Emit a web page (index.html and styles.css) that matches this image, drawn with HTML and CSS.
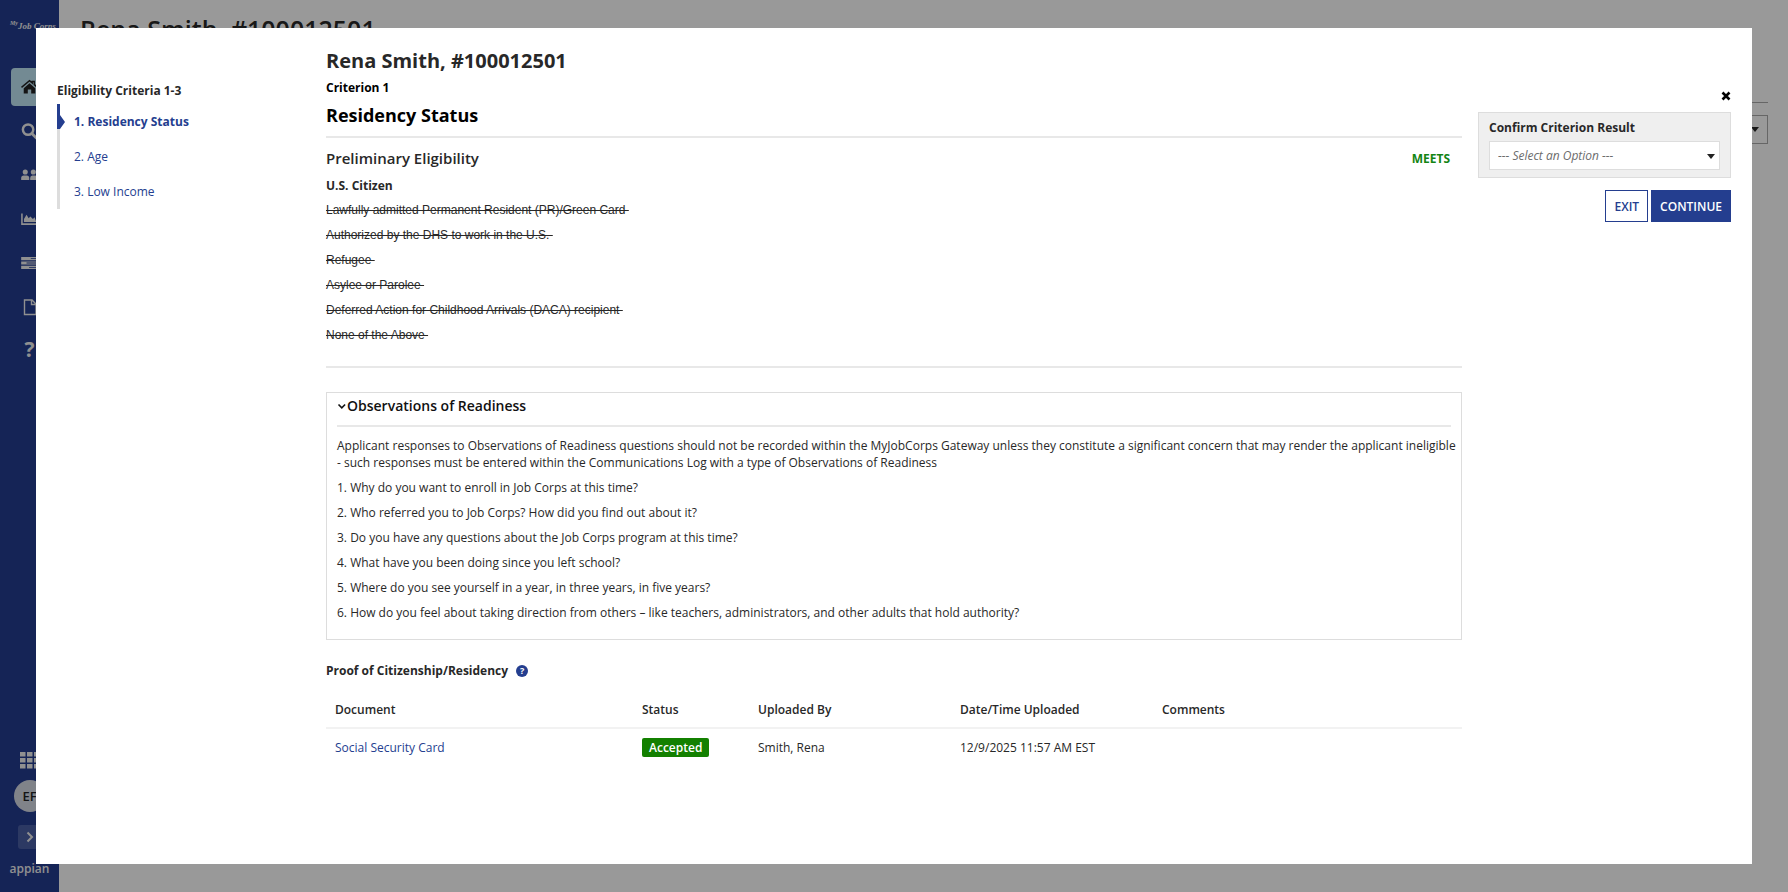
FILE: index.html
```html
<!DOCTYPE html>
<html lang="en">
<head>
<meta charset="utf-8">
<title>Eligibility Criteria - Residency Status</title>
<link rel="stylesheet" href="styles.css">
</head>
<body>
<div class="app" aria-hidden="true">
  <nav class="sidebar">
    <div class="brand"><span class="brand-my">My</span><span>Job Corps</span></div>
    <ul class="rail">
      <li><a class="rail-link active" href="#"><svg width="17" height="16" viewBox="0 0 20 18"><path d="M10 4.6 3.2 10.4V16.500h4.800v-4.500h4v4.500h4.800v-6.100z"/><path d="M.6 9.400 10 1.600l3.200 2.600V2.600h2.400v3.600l3.800 3.200" fill="none" stroke="currentColor" stroke-width="1.700"/></svg></a></li>
      <li><a class="rail-link" href="#"><svg width="17" height="17" viewBox="0 0 18 18"><circle cx="7.500" cy="7" r="5.500" fill="none" stroke="currentColor" stroke-width="2.600"/><path d="m11.500 11 4.500 4.500" stroke="currentColor" stroke-width="3" stroke-linecap="round"/></svg></a></li>
      <li><a class="rail-link" href="#"><svg width="17" height="14" viewBox="0 0 20 16"><circle cx="5" cy="4.500" r="3"/><circle cx="14.500" cy="4.500" r="3"/><path d="M.2 14v-2.500q0-3 3-3h3.500q3 0 3 3V14zM10.800 14v-2.500q0-3 2.500-3h3q3.500 0 3.500 3V14z"/></svg></a></li>
      <li><a class="rail-link" href="#"><svg width="17" height="14" viewBox="0 0 20 16"><path d="M.2 1.500H2v11.500h18V15H.2z"/><path d="M3.500 11.500V8l3-5 2.500 4 2-2 3 3 2-2 2 5.500z"/></svg></a></li>
      <li><a class="rail-link" href="#"><svg width="17" height="14" viewBox="0 0 20 16"><path fill-rule="evenodd" d="M.2 1H20v3.800H.2zM11.500 2.400v1h7v-1zM.2 6.100H20v3.800H.2zm6.300 1.400v1h12v-1zM.2 11.200H20V15H.2zm9.300 1.400v1h9v-1z"/></svg></a></li>
      <li><a class="rail-link" href="#"><svg width="14" height="17" viewBox="0 0 14 17"><path d="M1.500 1h7.500l4 4v10.500h-11.500zM8.500 1v4.500H13" fill="none" stroke="currentColor" stroke-width="1.400"/></svg></a></li>
      <li><a class="rail-link help-link" href="#">?</a></li>
    </ul>
    <div class="rail-foot">
      <svg class="grid-icon" width="20" height="18" viewBox="0 0 20 18"><path d="M0 1h5.500v4.500H0zM7 1h5.500v4.500H7zM14 1h5.500v4.500H14zM0 7h5.500v4.500H0zM7 7h5.500v4.500H7zM14 7h5.500v4.500H14zM0 13h5.500v4.500H0zM7 13h5.500v4.500H7zM14 13h5.500v4.500H14z"/></svg>
      <span class="avatar">EF</span>
      <button class="expand" type="button" aria-label="Expand"><svg width="8" height="12" viewBox="0 0 8 12"><path d="m1.500 1.500 4.500 4.500-4.500 4.500" fill="none" stroke="currentColor" stroke-width="2"/></svg></button>
      <span class="appian">appian</span>
    </div>
  </nav>
  <div class="page">
    <h1 class="page-title">Rena Smith, #100012501</h1>
    <hr class="page-rule">
    <div class="page-filter"><svg width="8" height="5" viewBox="0 0 8 5"><path d="M0 0h8L4 5z"/></svg></div>
  </div>
</div>

<div class="backdrop">
  <div class="modal" role="dialog" aria-labelledby="dialog-title">
    <aside class="steps">
      <h2 class="steps-title">Eligibility Criteria 1-3</h2>
      <ol class="step-list">
        <li class="step current"><a href="#">1. Residency Status</a></li>
        <li class="step"><a href="#">2. Age</a></li>
        <li class="step"><a href="#">3. Low Income</a></li>
      </ol>
    </aside>

    <main class="content">
      <h1 class="title" id="dialog-title">Rena Smith, #100012501</h1>
      <p class="criterion">Criterion 1</p>
      <h2 class="subtitle">Residency Status</h2>
      <section class="prelim">
        <div class="prelim-head"><h3 class="heading">Preliminary Eligibility</h3><strong class="meets">MEETS</strong></div>
        <p class="chosen">U.S. Citizen</p>
        <ul class="rejected">
          <li><s>Lawfully admitted Permanent Resident (PR)/Green Card&nbsp;</s></li>
          <li><s>Authorized by the DHS to work in the U.S.&nbsp;</s></li>
          <li><s>Refugee&nbsp;</s></li>
          <li><s>Asylee or Parolee&nbsp;</s></li>
          <li><s>Deferred Action for Childhood Arrivals (DACA) recipient&nbsp;</s></li>
          <li><s>None of the Above&nbsp;</s></li>
        </ul>
      </section>

      <section class="box">
        <h3 class="box-head"><button class="toggle" type="button" aria-expanded="true"><svg width="10" height="8" viewBox="0 0 10 8"><path d="m1.500 2.500 3.300 3.300L8.100 2.500" fill="none" stroke="currentColor" stroke-width="1.600"/></svg>Observations of Readiness</button></h3>
        <div class="box-body">
          <p>Applicant responses to Observations of Readiness questions should not be recorded within the MyJobCorps Gateway unless they constitute a significant concern that may render the applicant ineligible - such responses must be entered within the Communications Log with a type of Observations of Readiness</p>
          <p>1. Why do you want to enroll in Job Corps at this time?</p>
          <p>2. Who referred you to Job Corps? How did you find out about it?</p>
          <p>3. Do you have any questions about the Job Corps program at this time?</p>
          <p>4. What have you been doing since you left school?</p>
          <p>5. Where do you see yourself in a year, in three years, in five years?</p>
          <p>6. How do you feel about taking direction from others – like teachers, administrators, and other adults that hold authority?</p>
        </div>
      </section>

      <section class="proof">
        <h3 class="proof-title"><span id="proof-title">Proof of Citizenship/Residency</span><button class="hint" type="button" aria-label="Help">?</button></h3>
        <table class="docs" aria-labelledby="proof-title">
          <colgroup><col class="c-doc"><col class="c-status"><col class="c-by"><col class="c-date"><col></colgroup>
          <thead><tr><th scope="col">Document</th><th scope="col">Status</th><th scope="col">Uploaded By</th><th scope="col">Date/Time Uploaded</th><th scope="col">Comments</th></tr></thead>
          <tbody><tr><td><a href="#">Social Security Card</a></td><td><span class="tag">Accepted</span></td><td>Smith, Rena</td><td>12/9/2025 11:57 AM EST</td><td></td></tr></tbody>
        </table>
      </section>
    </main>

    <aside class="actions">
      <button class="close" type="button" aria-label="Close"><svg width="10" height="10" viewBox="0 0 10 10"><path d="m1.500 1.500 7 7m0-7-7 7" stroke="currentColor" stroke-width="2.600"/></svg></button>
      <div class="confirm">
        <label for="result">Confirm Criterion Result</label>
        <div class="select-wrap">
          <select id="result"><option>--- Select an Option ---</option><option>Meets</option><option>Does Not Meet</option></select>
          <svg class="caret" width="8" height="5" viewBox="0 0 8 5"><path d="M0 0h8L4 5z"/></svg>
        </div>
      </div>
      <div class="buttons"><button class="btn" type="button">EXIT</button><button class="btn primary" type="button">CONTINUE</button></div>
    </aside>
  </div>
</div>
</body>
</html>
```
FILE: styles.css
```css
:root {
  --blue: #243e8f;
  --text: #282828;
  --rule: #e8e8e8;
}

* { box-sizing: border-box; }

body {
  margin: 0;
  overflow: hidden;
  font: 12px/17px "Open Sans", sans-serif;
  color: var(--text);
}

h1, h2, h3, p, ul, ol { margin: 0; padding: 0; }
ul, ol { list-style: none; }
a { color: var(--blue); text-decoration: none; }
button, select { font: inherit; color: inherit; }
svg { display: block; fill: currentColor; }

/* Application behind the dialog */
.app { display: flex; height: 100vh; }

.sidebar {
  display: flex;
  flex-direction: column;
  width: 59px;
  flex: none;
  background: #243c90;
  color: #f0f0f0;
}

.brand {
  display: flex;
  height: 68px;
  padding: 16px 0 0 10px;
  font: italic bold 9px/20px "Liberation Serif", serif;
  white-space: nowrap;
}
.brand-my { font-size: 6px; line-height: 14px; }

.rail { display: flex; flex-direction: column; gap: 6px; }
.rail-link {
  display: flex;
  align-items: center;
  justify-content: center;
  height: 38px;
  margin: 0 11px;
  border-radius: 4px;
  color: #f0f0f0;
}
.rail-link.active { background: #c0e6f5; color: #222; }
.help-link { font-size: 21px; font-weight: 700; line-height: 34px; align-items: flex-start; }

.rail-foot {
  display: flex;
  flex-direction: column;
  align-items: center;
  margin-top: auto;
}
.avatar {
  width: 32px;
  margin: 11px 0 13px;
  border-radius: 50%;
  background: #d5dae5;
  color: #222;
  font-size: 13px;
  font-weight: 600;
  line-height: 32px;
  text-align: center;
}
.expand {
  display: flex;
  align-items: center;
  justify-content: center;
  width: 24px;
  height: 24px;
  padding: 0;
  border: 0;
  border-radius: 3px;
  background: #4a5fa6;
  color: #f0f0f0;
}
.appian { margin: 8px 0 11px; font-weight: 600; line-height: 24px; }

.page { flex: 1; padding: 12px 20px 0 21px; }
.page-title { font-size: 25px; font-weight: 600; line-height: 34px; }
.page-rule { margin: 56px 0 12px; border: 0; border-top: 1px solid #aaa; }
.page-filter {
  display: flex;
  align-items: center;
  justify-content: flex-end;
  width: 200px;
  height: 29px;
  margin-left: auto;
  padding-right: 8px;
  border: 1px solid #aaa;
}

/* Dialog */
.backdrop {
  position: fixed;
  inset: 0;
  display: flex;
  padding: 28px 36px;
  background: rgba(0, 0, 0, .4);
}
.modal {
  display: grid;
  grid-template-columns: 253px minmax(0, 1fr) 253px;
  column-gap: 16px;
  width: 100%;
  padding: 16px 21px;
  background: #fff;
}

.steps { padding-top: 38px; }
.steps-title { font-size: 12px; font-weight: 700; line-height: 18px; }
.step-list { margin-top: 4px; }
.step {
  position: relative;
  height: 35px;
  padding-left: 14px;
  border-left: 3px solid #ddd;
  line-height: 35px;
}
.step.current { font-weight: 700; }
.step.current::before {
  content: "";
  position: absolute;
  top: 0;
  left: -3px;
  width: 8px;
  height: 26px;
  background: var(--blue);
  clip-path: polygon(0 0, 3px 0, 3px 11px, 8px 18px, 3px 25px, 0 25px);
}

.title { font-size: 20px; font-weight: 700; line-height: 34px; }
.criterion { color: #000; font-weight: 700; line-height: 19px; }
.subtitle {
  padding: 4px 0 7px;
  border-bottom: 2px solid var(--rule);
  color: #000;
  font-size: 18px;
  font-weight: 700;
  line-height: 28px;
}

.prelim { padding: 8px 0 18px; border-bottom: 2px solid var(--rule); }
.prelim-head {
  display: flex;
  align-items: center;
  justify-content: space-between;
  padding-right: 12px;
}
.heading { font-size: 15px; font-weight: 600; line-height: 24px; }
.meets { color: #138413; font-weight: 700; }
.chosen { margin-top: 7px; font-weight: 700; line-height: 17px; }
.rejected { margin-top: 4px; font: 12px/25px "Liberation Sans", Arial, sans-serif; }

.box {
  margin-top: 24px;
  padding: 1px 10px 18px;
  border: 1px solid #ddd;
}
.box-head { padding-bottom: 7px; margin-bottom: 10px; border-bottom: 2px solid var(--rule); }
.box-body { margin-right: -8px; }
.box-body p + p { margin-top: 8px; }
.toggle {
  display: flex;
  align-items: center;
  padding: 0;
  border: 0;
  background: none;
  color: #111;
  font-size: 14px;
  font-weight: 600;
  line-height: 24px;
}

.proof { margin-top: 19px; }
.proof-title {
  display: flex;
  align-items: center;
  gap: 8px;
  font-size: 12px;
  font-weight: 700;
  line-height: 24px;
}
.hint {
  width: 12px;
  height: 12px;
  padding: 0;
  border: 0;
  border-radius: 50%;
  background: var(--blue);
  color: #fff;
  font-size: 9px;
  font-weight: 700;
  line-height: 12px;
}
.docs { width: 100%; margin-top: 8px; border-collapse: collapse; table-layout: fixed; text-align: left; }
.c-doc { width: 307px; }
.c-status { width: 116px; }
.c-by, .c-date { width: 202px; }
.docs th, .docs td { padding: 9px 0 8px 9px; }
.docs th { height: 37px; border-bottom: 2px solid #f2f2f2; font-weight: 600; }
.tag {
  display: inline-block;
  padding: 0 7px;
  border-radius: 2px;
  background: #138000;
  color: #fff;
  font-weight: 600;
  line-height: 19px;
}

.actions { padding-top: 47px; }
.close { display: block; margin: 0 0 11px auto; padding: 0; border: 0; background: none; color: #000; }
.confirm { padding: 5px 10px 7px; border: 1px solid #ddd; background: #efefef; }
.confirm label { display: block; font-weight: 700; line-height: 20px; }
.select-wrap { position: relative; margin-top: 3px; }
.select-wrap select {
  display: block;
  width: 100%;
  height: 29px;
  padding: 0 8px;
  border: 1px solid #ddd;
  border-radius: 0;
  appearance: none;
  background: #fff;
  color: #6c6c6c;
  font-style: italic;
}
.caret { position: absolute; top: 13px; right: 5px; pointer-events: none; color: #222; }
.buttons { display: flex; justify-content: flex-end; gap: 3px; margin-top: 12px; }
.btn {
  height: 32px;
  padding: 0 8px;
  border: 1px solid var(--blue);
  background: #fff;
  color: var(--blue);
  font-weight: 600;
}
.btn.primary { background: var(--blue); color: #fff; }
```
